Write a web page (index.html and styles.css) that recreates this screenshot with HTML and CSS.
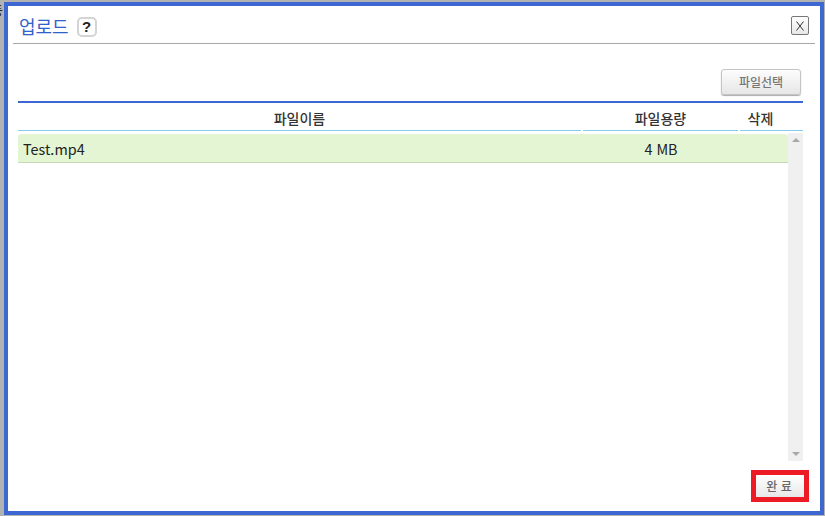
FILE: index.html
```html
<!DOCTYPE html>
<html lang="ko">
<head>
<meta charset="utf-8">
<title>업로드</title>
<link rel="stylesheet" href="styles.css">
</head>
<body>
<span class="behind">등</span>
<div class="dialog">
  <header class="title-bar">
    <h1 class="title">업로드</h1>
    <span class="help">?</span>
    <button class="close" type="button" aria-label="닫기">
      <svg width="8" height="10" viewBox="0 0 8 10"><path d="M.5.5l7 9M7.5.5l-7 9" fill="none" stroke="#333" stroke-width="1"/></svg>
    </button>
  </header>
  <div class="content">
    <div class="toolbar"><button class="btn-select" type="button">파일선택</button></div>
    <div class="table-head">
      <div class="col col-name">파일이름</div>
      <div class="col col-size">파일용량</div>
      <div class="col col-del">삭제</div>
    </div>
    <div class="table-body">
      <div class="rows">
        <div class="row">
          <div class="cell-name">Test.mp4</div>
          <div class="cell-size">4 MB</div>
        </div>
      </div>
      <div class="scrollbar">
        <span class="arrow arrow-up"></span>
        <span class="arrow arrow-down"></span>
      </div>
    </div>
    <div class="footer">
      <div class="highlight"><button class="btn-done" type="button">완 료</button></div>
    </div>
  </div>
</div>
</body>
</html>
```
FILE: styles.css
```css
* { box-sizing: border-box; }
html, body { margin: 0; height: 100%; }
body {
  position: relative;
  width: 825px;
  height: 516px;
  overflow: hidden;
  background: #b2b2b2;
  padding: 2px 1px 1px 4px;
  font-family: "Noto Sans CJK KR", "Noto Sans", sans-serif;
}
.behind {
  position: absolute;
  left: -9px;
  top: 2px;
  color: #222;
  font-size: 13px;
  line-height: 16px;
}
.dialog {
  position: relative;
  width: 820px;
  height: 513px;
  border: 4px solid #3d68d2;
  background: #fff;
  padding: 0 5px;
  display: flex;
  flex-direction: column;
}
.title-bar {
  height: 38px;
  flex: none;
  border-bottom: 1px solid #a8a8a8;
  display: flex;
  align-items: center;
  padding: 2px 6px 0 6px;
}
.title {
  margin: 0;
  font-size: 18px;
  font-weight: 400;
  color: #2f62cc;
  line-height: 24px;
}
.help {
  margin-left: 8px;
  width: 20px;
  height: 20px;
  margin-top: 2px;
  border: 2px solid #d4d4d4;
  border-radius: 5px;
  color: #222;
  font: 700 15px/16px "Liberation Sans", sans-serif;
  text-align: center;
}
.close {
  margin-left: auto;
  width: 18px;
  height: 19px;
  padding: 0;
  border: 1px solid #777;
  border-radius: 2px;
  background: linear-gradient(#fff, #e8e8e8);
  display: flex;
  align-items: center;
  justify-content: center;
}
.content {
  flex: 1;
  padding: 0 12px 0 5px;
  display: flex;
  flex-direction: column;
}
.toolbar {
  height: 59px;
  flex: none;
  display: flex;
  justify-content: flex-end;
  align-items: flex-start;
  padding: 25px 2px 0 0;
  border-bottom: 2px solid #3d68d2;
}
.btn-select {
  width: 80px;
  height: 26px;
  padding: 0;
  border: 1px solid #c4c4c4;
  border-radius: 3px;
  background: linear-gradient(#fdfdfd, #e6e6e6);
  box-shadow: 0 1px 1px #aaa;
  color: #777;
  font: 500 12px/22px "Noto Sans CJK KR", sans-serif;
}
.table-head {
  height: 28px;
  flex: none;
  display: flex;
  gap: 2px;
}
.col {
  border-bottom: 1px solid #85cfee;
  color: #333;
  font-size: 14px;
  font-weight: 500;
  line-height: 31px;
  text-align: center;
}
.col-name { width: 563px; }
.col-size { width: 155px; }
.col-del { width: 63px; padding-right: 22px; }
.table-body {
  height: 330px;
  flex: none;
  padding-top: 2px;
  display: flex;
}
.rows { width: 770px; flex: none; padding-top: 1px; }
.row {
  height: 29px;
  display: flex;
  align-items: center;
  padding-top: 2px;
  background: #e4f5d3;
  border-bottom: 1px solid #c6d8b8;
  border-radius: 3px 3px 0 0;
  color: #222;
}
.cell-name { width: 565px; padding-left: 5px; font: 400 14.4px/20px "Noto Sans CJK KR", sans-serif; }
.cell-size { width: 155px; padding-left: 1px; text-align: center; font: 400 14.4px/20px "Noto Sans CJK KR", sans-serif; }
.scrollbar {
  width: 15px;
  flex: none;
  background: #f0f0f0;
  display: flex;
  flex-direction: column;
  justify-content: space-between;
  align-items: center;
  padding: 5px 0 5px;
}
.arrow { width: 0; height: 0; border-left: 4px solid transparent; border-right: 4px solid transparent; }
.arrow-up { border-bottom: 4px solid #a8a8a8; }
.arrow-down { border-top: 4px solid #a8a8a8; }
.footer {
  flex: none;
  display: flex;
  justify-content: flex-end;
  padding-top: 9px;
  margin-right: -6px;
}
.highlight {
  width: 58px;
  height: 32px;
  border: 5px solid #ed1c24;
}
.btn-done {
  display: block;
  width: 100%;
  height: 100%;
  padding: 0 2px 0 0;
  border: 0;
  background: linear-gradient(#fff, #e8e8e8);
  color: #666;
  font: 500 12px/22px "Noto Sans CJK KR", sans-serif;
}
```
